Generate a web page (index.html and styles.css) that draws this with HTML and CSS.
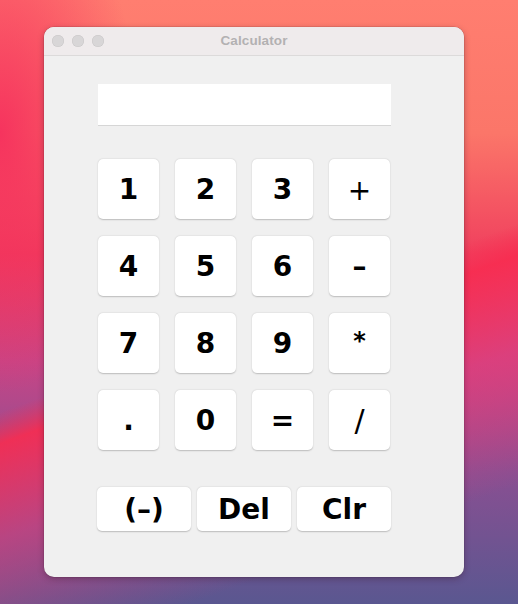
FILE: index.html
```html
<!DOCTYPE html>
<html>
<head>
<meta charset="utf-8">
<title>Calculator</title>
<link rel="stylesheet" href="styles.css">
</head>
<body>
<div class="desktop">
  <div class="window">
    <div class="titlebar">
      <div class="lights">
        <span class="light"></span>
        <span class="light"></span>
        <span class="light"></span>
      </div>
      <div class="title">Calculator</div>
    </div>
    <div class="content">
      <div class="display"></div>
      <div class="keys">
        <button class="key">1</button>
        <button class="key">2</button>
        <button class="key">3</button>
        <button class="key op-plus">+</button>
        <button class="key">4</button>
        <button class="key">5</button>
        <button class="key">6</button>
        <button class="key">–</button>
        <button class="key">7</button>
        <button class="key">8</button>
        <button class="key">9</button>
        <button class="key op-star">*</button>
        <button class="key op-dot">.</button>
        <button class="key">0</button>
        <button class="key">=</button>
        <button class="key op-slash">/</button>
      </div>
      <div class="actions">
        <button class="key wide">(–)</button>
        <button class="key wide">Del</button>
        <button class="key wide">Clr</button>
      </div>
    </div>
  </div>
</div>
</body>
</html>
```
FILE: styles.css
```css
html, body {
  margin: 0;
  padding: 0;
}
body {
  width: 518px;
  height: 604px;
  overflow: hidden;
  font-family: "DejaVu Sans", "Liberation Sans", sans-serif;
}
.desktop {
  width: 518px;
  height: 604px;
  padding: 27px 0 0 44px;
  box-sizing: border-box;
  background:
    radial-gradient(ellipse 140px 260px at 0% 22%, rgba(245, 40, 92, 0.85), rgba(245, 40, 92, 0) 100%),
    linear-gradient(160deg, rgba(0,0,0,0) 52%, rgba(248, 44, 80, 0.9) 56%, rgba(230, 60, 120, 0.6) 68%, rgba(0,0,0,0) 85%),
    linear-gradient(180deg, #ff7e70 0%, #fb7669 22%, #f0405e 42%, #c84586 60%, #8a4f92 78%, #5a5790 100%);
}
.window {
  width: 420px;
  height: 550px;
  border-radius: 10px;
  overflow: hidden;
  background: #f0f0f0;
  box-shadow: 0 2px 6px rgba(60, 20, 40, 0.35), 0 0 0 0.5px rgba(0,0,0,0.15);
  display: flex;
  flex-direction: column;
}
.titlebar {
  height: 28px;
  flex: none;
  background: #efebec;
  border-bottom: 1px solid #dcdada;
  display: flex;
  align-items: center;
  position: relative;
}
.lights {
  display: flex;
  gap: 8px;
  padding-left: 8px;
}
.light {
  width: 12px;
  height: 12px;
  border-radius: 50%;
  background: #d8d6d7;
  box-shadow: inset 0 0 0 0.5px #c8c6c7;
}
.title {
  position: absolute;
  left: 0;
  right: 0;
  top: 0;
  line-height: 28px;
  text-align: center;
  font-family: "Liberation Sans", sans-serif;
  font-weight: bold;
  font-size: 13.5px;
  color: #b3b1b2;
  letter-spacing: 0.1px;
}
.content {
  flex: 1;
  padding: 28px 0 0 54px;
  display: flex;
  flex-direction: column;
}
.display {
  width: 293px;
  height: 42px;
  background: #ffffff;
  border-bottom: 1px solid #d6d6d6;
  box-sizing: border-box;
}
.keys {
  margin-top: 33px;
  display: grid;
  grid-template-columns: repeat(4, 61px);
  grid-auto-rows: 60px;
  column-gap: 16px;
  row-gap: 17px;
}
.key {
  margin: 0;
  padding: 1px 0 0;
  border: none;
  background: #ffffff;
  border-radius: 5px;
  box-shadow: 0 0.5px 1.5px rgba(0, 0, 0, 0.22);
  font-family: "DejaVu Sans", sans-serif;
  font-weight: bold;
  font-size: 28px;
  color: #000;
  display: flex;
  align-items: center;
  justify-content: center;
  line-height: 1;
}
.op-plus {
  font-weight: normal;
  padding-top: 4px;
}
.op-star {
  font-size: 24px;
  padding-bottom: 6px;
}
.op-slash {
  font-weight: normal;
  font-size: 30px;
}
.actions {
  margin-top: 37px;
  margin-left: -1px;
  display: flex;
  gap: 6px;
}
.wide {
  width: 94px;
  height: 44px;
  font-size: 28px;
}
```
